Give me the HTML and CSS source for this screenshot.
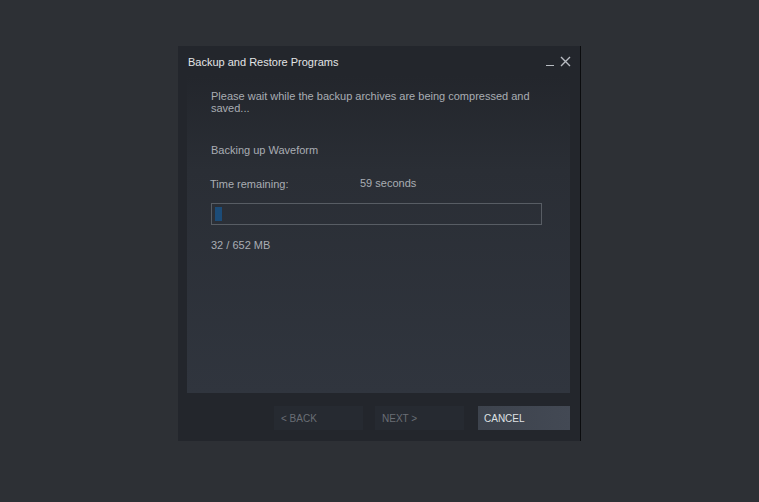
FILE: index.html
```html
<!DOCTYPE html>
<html lang="en">
<head>
    <meta charset="UTF-8">
    <meta name="viewport" content="width=device-width, initial-scale=1.0">
    <title>Backup and Restore Programs</title>
    <link rel="stylesheet" href="styles.css">
</head>
<body>
    <div class="window">
        <div class="titlebar">
            <span class="title">Backup and Restore Programs</span>
            <div class="controls">
                <span class="minimize"></span>
                <svg class="close" width="11" height="11" viewBox="0 0 11 11">
                    <path d="M1 1 L10 10 M10 1 L1 10" stroke="#b8bcc2" stroke-width="1.4" fill="none"/>
                </svg>
            </div>
        </div>
        <div class="panel">
            <p class="intro">Please wait while the backup archives are being compressed and saved...</p>
            <p class="status">Backing up Waveform</p>
            <div class="time">
                <span class="label">Time remaining:</span>
                <span class="value">59 seconds</span>
            </div>
            <div class="progress">
                <div class="fill" style="width: 2.2%"></div>
            </div>
            <p class="size">32 / 652 MB</p>
        </div>
        <div class="footer">
            <button class="btn disabled">&lt; BACK</button>
            <button class="btn disabled">NEXT &gt;</button>
            <button class="btn primary">CANCEL</button>
        </div>
    </div>
</body>
</html>
```

FILE: styles.css
```css
body {
    margin: 0;
    height: 502px;
    background: #2d3035;
    font-family: Arial, "Liberation Sans", sans-serif;
    overflow: hidden;
}

.window {
    width: 402px;
    height: 395px;
    margin: 46px auto 0 178px;
    background: #23262c;
    border-right: 1px solid #0b0c0e;
    display: flex;
    flex-direction: column;
}

.titlebar {
    height: 30px;
    display: flex;
    align-items: center;
    justify-content: space-between;
    padding: 0 10px;
    flex-shrink: 0;
}

.title {
    font-size: 11px;
    color: #e2e4e6;
    margin-top: 1px;
}

.controls {
    display: flex;
    align-items: center;
    gap: 6px;
    margin-right: -1px;
}

.minimize {
    display: block;
    width: 8px;
    height: 1px;
    background: #b8bcc2;
    margin-top: 8px;
}

.panel {
    margin: 0 10px 0 9px;
    height: 317px;
    background: linear-gradient(180deg, #23262c 0%, #2a2e35 30%, #30353e 100%);
    padding: 14px 24px 0 24px;
    box-sizing: border-box;
    color: #a9adb3;
    font-size: 11px;
}

.panel p {
    margin: 0;
}

.intro {
    line-height: 12px;
    padding-right: 10px;
}

.status {
    margin-top: 30px !important;
}

.time {
    display: flex;
    margin-top: 21px;
    margin-left: -1px;
}

.time .label {
    width: 150px;
    margin-top: 1px;
}

.progress {
    margin-top: 13px;
    height: 22px;
    border: 1px solid #585d64;
    box-sizing: border-box;
    padding: 3px;
    width: 331px;
}

.fill {
    height: 100%;
    background: #1c4c78;
}

.size {
    margin-top: 14px !important;
}

.footer {
    display: flex;
    justify-content: flex-end;
    gap: 12px;
    padding: 13px 10px 0 0;
}

.btn {
    height: 24px;
    width: 89px;
    border: none;
    text-align: left;
    padding: 0 6px;
    font-family: Arial, "Liberation Sans", sans-serif;
    font-size: 10px;
    background: #262a31;
    color: #6a6e75;
}

.btn.disabled {
    padding-left: 7px;
}

.btn.primary {
    width: 92px;
    background: linear-gradient(90deg, #3d434d, #434954);
    color: #dfe1e3;
    margin-left: 2px;
}
```
